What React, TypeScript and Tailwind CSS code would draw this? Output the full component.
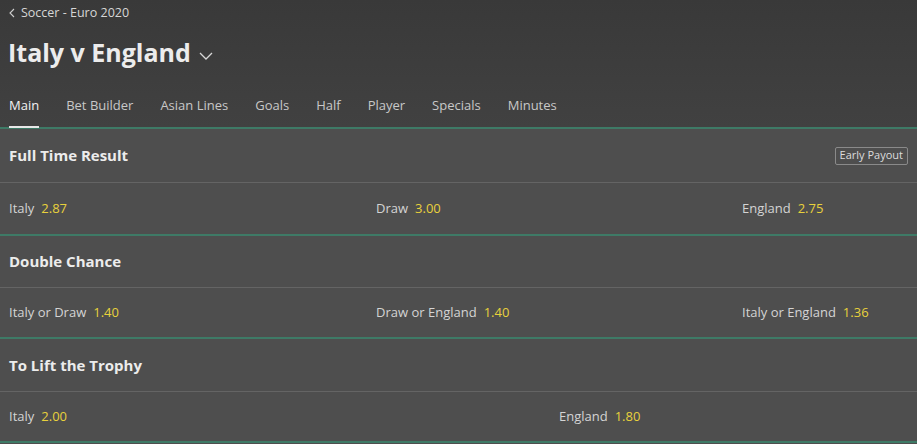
import React from "react";

const tabs = ["Main", "Bet Builder", "Asian Lines", "Goals", "Half", "Player", "Specials", "Minutes"];

type Pick = { label: string; odds: string };

const markets: { title: string; cols: string; head: string; row: string; picks: Pick[]; badge?: boolean }[] = [
	{
		title: "Full Time Result",
		cols: "grid-cols-[367px_366px_1fr]",
		head: "h-[54px]",
		row: "h-[51px]",
		badge: true,
		picks: [
			{ label: "Italy", odds: "2.87" },
			{ label: "Draw", odds: "3.00" },
			{ label: "England", odds: "2.75" },
		],
	},
	{
		title: "Double Chance",
		cols: "grid-cols-[367px_366px_1fr]",
		head: "h-[52px]",
		row: "h-[49px]",
		picks: [
			{ label: "Italy or Draw", odds: "1.40" },
			{ label: "Draw or England", odds: "1.40" },
			{ label: "Italy or England", odds: "1.36" },
		],
	},
	{
		title: "To Lift the Trophy",
		cols: "grid-cols-[550px_1fr]",
		head: "h-[53px]",
		row: "h-[49px]",
		picks: [
			{ label: "Italy", odds: "2.00" },
			{ label: "England", odds: "1.80" },
		],
	},
];

const App = () => {
	return (
		<main className="w-[917px] h-[444px] overflow-hidden bg-[#4e4e4e] font-['Open_Sans',sans-serif]">
			{/* Header ------------------------------------------------------------ */}
			<section className="bg-gradient-to-b from-[#393939] to-[#414141] pt-[4px] border-b-2 border-[#3e7a66]">
				<div className="pl-[9px] flex items-center gap-[6px] h-[18px] text-[12.5px] text-[#d6d6d6]">
					<svg width="6" height="10" viewBox="0 0 6 10" fill="none">
						<path d="M5 1L1 5l4 4" stroke="#cfcfcf" strokeWidth="1.1" />
					</svg>
					<span>Soccer - Euro 2020</span>
				</div>
				<div className="pl-[8px] mt-[15px] flex items-center h-[32px]">
					<h1 className="text-[25px] font-bold text-[#ececec]">Italy v England</h1>
					<svg className="ml-[8px] mt-[5px]" width="14" height="8" viewBox="0 0 14 8" fill="none">
						<path d="M1 1l6 6 6-6" stroke="#d8d8d8" strokeWidth="1.3" />
					</svg>
				</div>
				<nav className="pl-[9px] mt-[27px] flex gap-[27px] text-[13px] text-[#c8c8c8]">
					{tabs.map((t, i) => (
						<div key={t} className="relative h-[31px]">
							<span className={i === 0 ? "text-[#f2f2f2]" : ""}>{t}</span>
							{i === 0 && <div className="absolute left-0 right-0 bottom-[-1px] h-[2px] bg-[#e8e8e8]" />}
						</div>
					))}
				</nav>
			</section>

			{/* Markets ----------------------------------------------------------- */}
			{markets.map((m) => (
				<section key={m.title} className="border-b-2 border-[#3e7a66]">
					<div className={`${m.head} flex items-center justify-between pl-[9px] pr-[9px] border-b border-[#646464]`}>
						<h2 className="text-[15px] font-bold text-[#ececec]">{m.title}</h2>
						{m.badge && (
							<span className="h-[18px] px-[4px] flex items-center border border-[#8a8a8a] rounded-[2px] text-[11px] text-[#dcdcdc]">
								Early Payout
							</span>
						)}
					</div>
					<div className={`${m.row} grid ${m.cols} items-center pl-[9px] text-[13px]`}>
						{m.picks.map((p) => (
							<div key={p.label} className="flex gap-[7px]">
								<span className="text-[#d4d4d4]">{p.label}</span>
								<span className="text-[#e8d13c]">{p.odds}</span>
							</div>
						))}
					</div>
				</section>
			))}
		</main>
	);
};

export default App;
